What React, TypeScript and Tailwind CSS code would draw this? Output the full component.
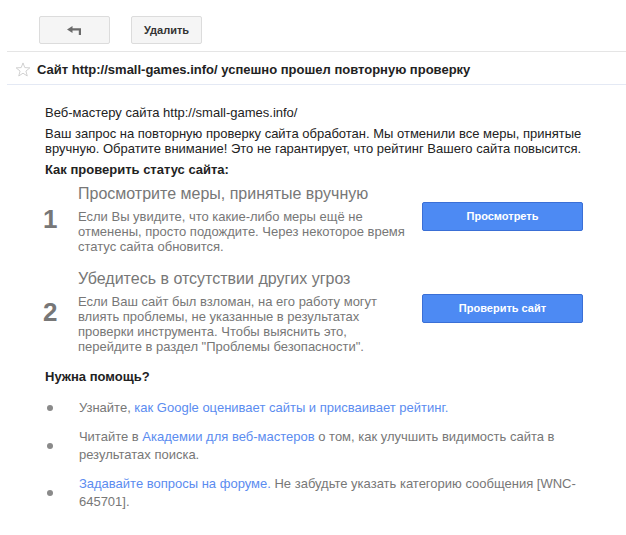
function ReplyIcon() {
  return (
    <svg width="15" height="9" viewBox="0 0 15 9" fill="#6b6b6b">
      <path d="M0 3.5 L5.5 0 V7 Z" />
      <path d="M5 2.3 H14 V9 H11.8 V4.6 H5 Z" />
    </svg>
  );
}

function StarIcon() {
  return (
    <svg width="16" height="15" viewBox="0 0 24 23">
      <path
        d="M12 1.5 L14.8 8.6 L22.5 9 L16.5 13.9 L18.5 21.4 L12 17.2 L5.5 21.4 L7.5 13.9 L1.5 9 L9.2 8.6 Z"
        fill="none"
        stroke="#c9c9c9"
        strokeWidth="1.3"
        strokeLinejoin="round"
      />
    </svg>
  );
}

interface StepProps {
  num: string;
  title: string;
  text: string;
  action: string;
}

function Step({ num, title, text, action }: StepProps) {
  return (
    <div className="flex items-center">
      <div className="w-[35px] -ml-[2px] text-[26px] font-bold leading-none text-[#777]">{num}</div>
      <div className="w-[332px]">
        <div className="text-[16px] leading-[20px] text-[#777]">{title}</div>
        <div className="mt-[5px] text-[13px] leading-[15px] text-[#777]">{text}</div>
      </div>
      <button className="ml-[12px] mb-[6px] h-[29px] w-[161px] rounded-[2px] border border-[#3a6fd6] bg-[#4d8af3] text-[11px] font-bold text-white">
        {action}
      </button>
    </div>
  );
}

function Bullet({ children }: { children: React.ReactNode }) {
  return (
    <li className="flex items-center">
      <span className="w-[34px] pl-[2px]">
        <span className="block h-[6px] w-[6px] rounded-full bg-[#8a8a8a]" />
      </span>
      <span className="w-[512px] text-[13px] leading-[18px] text-[#777]">{children}</span>
    </li>
  );
}

export default function App() {
  const link = 'text-[#5b8cf0]';
  return (
    <div className="h-[535px] w-[626px] overflow-hidden bg-white font-['Liberation_Sans',Arial,sans-serif] text-[#222]">
      {/* toolbar */}
      <div className="flex gap-[21px] pl-[39px] pt-4">
        <button className="flex h-[28px] w-[71px] items-center justify-center rounded-[2px] border border-[#dcdcdc] bg-[#f5f5f5]">
          <ReplyIcon />
        </button>
        <button className="h-[28px] w-[71px] rounded-[2px] border border-[#dcdcdc] bg-[#f5f5f5] text-[11px] font-bold text-[#333]">
          Удалить
        </button>
      </div>

      {/* subject */}
      <div className="ml-[7px] mt-[7px] flex h-[34px] items-center border-b border-t border-b-[#e4e9f4] border-t-[#e5e5e5] pt-[3px]">
        <span className="ml-[8px] mr-[6px] flex">
          <StarIcon />
        </span>
        <span className="text-[13px] font-bold leading-[15px] text-[#222]">
          Сайт http://small-games.info/ успешно прошел повторную проверку
        </span>
      </div>

      {/* body */}
      <div className="w-[590px] pl-[45px] pt-[20px] text-[13px] leading-[15px]">
        <p>Веб-мастеру сайта http://small-games.info/</p>
        <p className="mt-[6px]">
          Ваш запрос на повторную проверку сайта обработан. Мы отменили все меры, принятые вручную. Обратите
          внимание! Это не гарантирует, что рейтинг Вашего сайта повысится.
        </p>
        <p className="mt-[6px] font-bold">Как проверить статус сайта:</p>

        <div className="mt-[7px] flex flex-col gap-[15px]">
          <Step
            num="1"
            title="Просмотрите меры, принятые вручную"
            text="Если Вы увидите, что какие-либо меры ещё не отменены, просто подождите. Через некоторое время статус сайта обновится."
            action="Просмотреть"
          />
          <Step
            num="2"
            title="Убедитесь в отсутствии других угроз"
            text={'Если Ваш сайт был взломан, на его работу могут влиять проблемы, не указанные в результатах проверки инструмента. Чтобы выяснить это, перейдите в раздел "Проблемы безопасности".'}
            action="Проверить сайт"
          />
        </div>

        <p className="mt-[15px] font-bold">Нужна помощь?</p>

        <ul className="mt-[15px] flex flex-col gap-[11px]">
          <Bullet>
            Узнайте, <span className={link}>как Google оценивает сайты и присваивает рейтинг.</span>
          </Bullet>
          <Bullet>
            Читайте в <span className={link}>Академии для веб-мастеров</span> о том, как улучшить видимость
            сайта в результатах поиска.
          </Bullet>
          <Bullet>
            <span className={link}>Задавайте вопросы на форуме.</span> Не забудьте указать категорию сообщения
            [WNC-645701].
          </Bullet>
        </ul>
      </div>
    </div>
  );
}
